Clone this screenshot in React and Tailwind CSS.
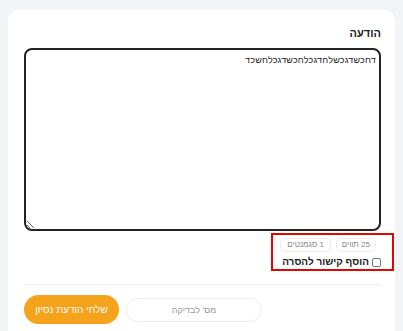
export default function App() {
  return (
    <div
      dir="rtl"
      className="min-h-[331px] w-[403px] bg-[#f3f4f8] pt-[10px] font-['Liberation_Sans',sans-serif] text-[#222]"
    >
      <div className="mr-2 w-[387px] rounded-[10px] bg-white pl-4 pr-[14px] pt-[15px] pb-6">
        <label className="block h-4 text-[11px] font-bold leading-4">הודעה</label>

        <textarea
          defaultValue="דחכשדגכשלחדגכלחכשדגכלחשכד"
          className="mt-[7px] block h-[183px] w-full resize-y rounded-[8px] border-2 border-[#222] px-[3px] pt-[4px] text-[9px] leading-3 tracking-[0.2px] text-[#222] outline-none"
        />

        {/* counters + unsubscribe link */}
        <div className="relative mt-[7px]">
          <div className="flex gap-[5px] pr-[5px]">
            <span className="flex h-[14px] items-center rounded-[5px] border border-[#ececec] px-[5px] text-[8px] text-[#888]">
              25 תווים
            </span>
            <span className="flex h-[14px] items-center rounded-[5px] border border-[#ececec] px-[6px] text-[8px] text-[#888]">
              1 סגמנטים
            </span>
          </div>
          <label className="mt-[3px] flex h-[14px] items-center gap-[3px]">
            <input
              type="checkbox"
              className="h-[9px] w-[9px] appearance-none rounded-[2px] border border-[#777] bg-white"
            />
            <span className="text-[10px] font-bold leading-[14px]">הוסף קישור להסרה</span>
          </label>
          <div className="pointer-events-none absolute top-[-5px] bottom-[-2px] right-[-13px] w-[123px] border-2 border-[#e10600]" />
        </div>

        <div className="mt-[15px] border-t border-[#f0f0f0]" />

        <div className="mt-[10px] flex items-center justify-end gap-[7px]">
          <input
            type="text"
            placeholder="מס' לבדיקה"
            className="h-6 w-[136px] rounded-[12px] border border-[#ececec] text-center text-[9px] outline-none placeholder:text-[#999]"
          />
          <button className="h-[29px] w-[95px] rounded-full bg-[#f5a31a] text-[10px] font-medium text-white">
            שלחי הודעת נסיון
          </button>
        </div>
      </div>
    </div>
  );
}
